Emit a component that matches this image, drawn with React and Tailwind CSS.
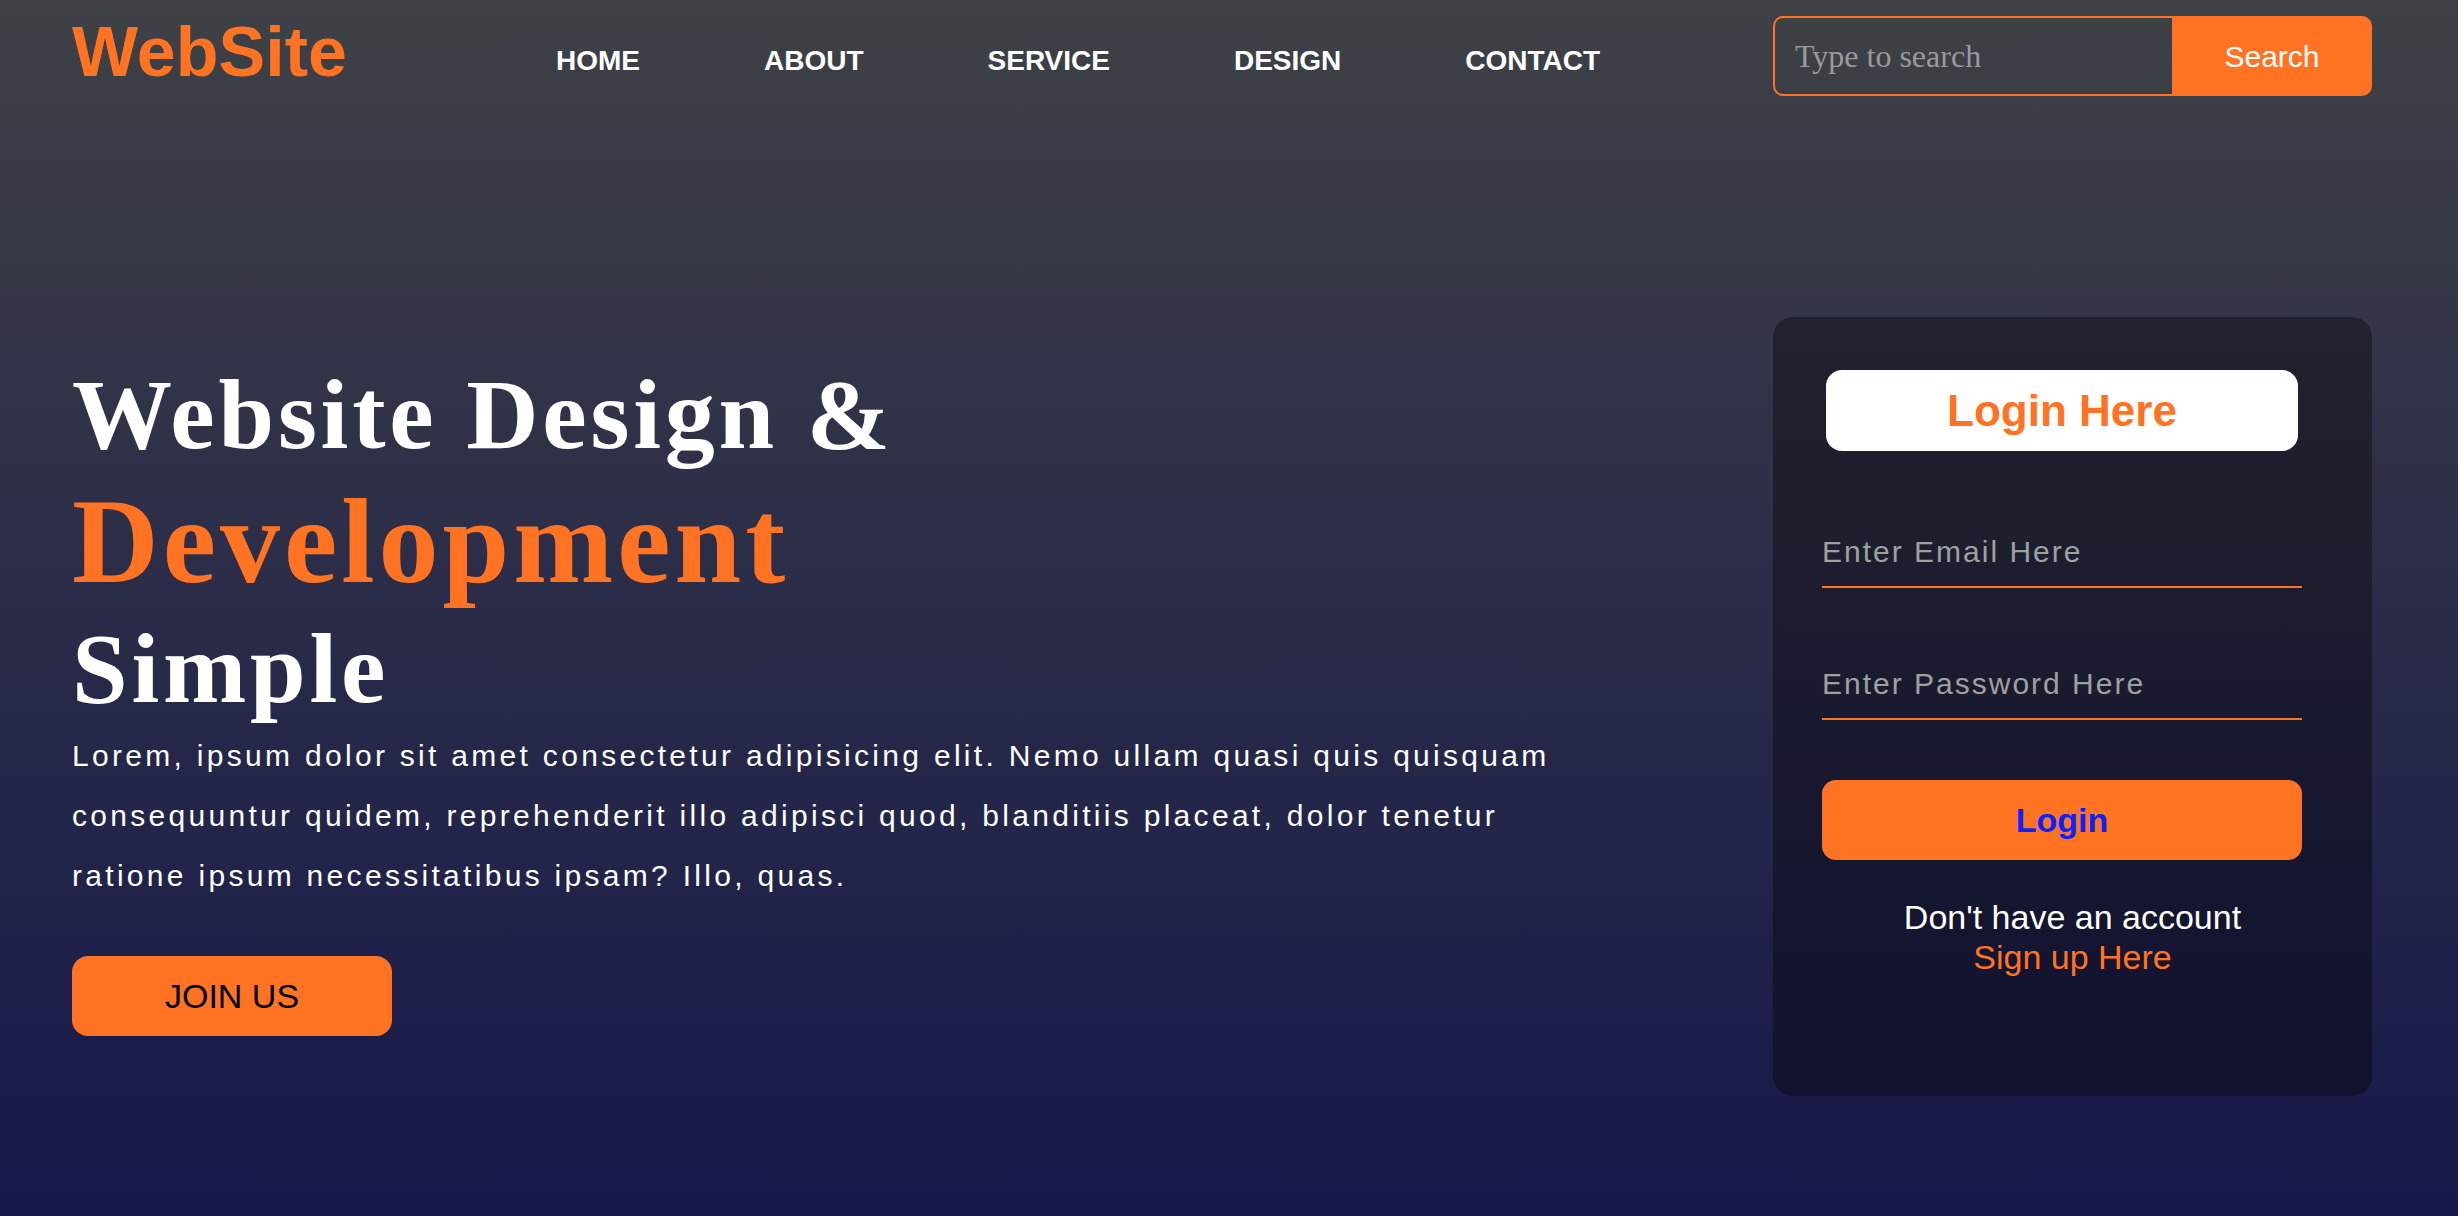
import React from 'react';

const navItems = ['HOME', 'ABOUT', 'SERVICE', 'DESIGN', 'CONTACT'];

function Header() {
  return (
    <header className="flex h-[113px] items-start">
      {/* logo */}
      <div className="ml-[72px] mt-[17px] w-[484px] text-[70px] leading-[70px] font-bold text-[#ff7322]">
        WebSite
      </div>

      <ul className="mt-[47px] flex gap-[124px]">
        {navItems.map(item => (
          <li key={item} className="text-[28px] leading-[28px] font-bold text-white">
            {item}
          </li>
        ))}
      </ul>

      {/* search */}
      <div className="ml-auto mr-[86px] mt-[16px] flex h-[80px] w-[599px]">
        <input
          type="text"
          placeholder="Type to search"
          className="h-full w-[399px] rounded-l-[10px] border-2 border-r-0 border-[#ff7322] bg-transparent pl-[20px] font-['Liberation_Serif',serif] text-[32px] text-white outline-none placeholder:text-[#9a9a9a]"
        />
        <button className="flex-1 rounded-r-[10px] bg-[#ff7322] text-[30px] text-white">
          Search
        </button>
      </div>
    </header>
  );
}

function Hero() {
  return (
    <div className="w-[1510px] pt-[40px]">
      <h1 className="font-['Liberation_Serif',serif] font-bold text-white">
        <div className="text-[100px] leading-[115px] tracking-[3.8px]">Website Design &amp;</div>
        <div className="text-[120px] leading-[139px] tracking-[4px] text-[#ff7322]">Development</div>
        <div className="text-[100px] leading-[115px] tracking-[3.8px]">Simple</div>
      </h1>
      <p className="text-[30px] leading-[60px] tracking-[3.3px] text-white">
        Lorem, ipsum dolor sit amet consectetur adipisicing elit. Nemo ullam quasi quis quisquam
        consequuntur quidem, reprehenderit illo adipisci quod, blanditiis placeat, dolor tenetur
        ratione ipsum necessitatibus ipsam? Illo, quas.
      </p>
      <button className="mt-[50px] h-[80px] w-[320px] rounded-[16px] bg-[#ff7322] text-[34px] text-black">
        JOIN US
      </button>
    </div>
  );
}

function LoginCard() {
  return (
    <div className="mr-[86px] h-[779px] w-[599px] rounded-[20px] bg-black/35">
      <div className="ml-[53px] mt-[53px] flex h-[81px] w-[472px] items-center justify-center rounded-[16px] bg-white text-[44px] font-bold text-[#ff7322]">
        Login Here
      </div>

      <div className="ml-[49px] w-[480px]">
        <input
          type="email"
          placeholder="Enter Email Here"
          className="mt-[66px] box-content block h-[69px] w-full border-b-2 border-[#ff7322] bg-transparent text-[30px] tracking-[2px] text-white outline-none placeholder:text-[#a0a0a0]"
        />
        <input
          type="password"
          placeholder="Enter Password Here"
          className="mt-[61px] box-content block h-[69px] w-full border-b-2 border-[#ff7322] bg-transparent text-[30px] tracking-[2px] text-white outline-none placeholder:text-[#a0a0a0]"
        />
        <button className="mt-[60px] block h-[80px] w-full rounded-[14px] bg-[#ff7322] text-[34px] font-bold text-[#0b22ff]">
          Login
        </button>
      </div>

      <div className="mt-[37px] text-center text-[34px] leading-[40px]">
        <p className="text-white">Don't have an account</p>
        <a href="#" className="text-[#ff7322]">Sign up Here</a>
      </div>
    </div>
  );
}

export default function App() {
  return (
    <div className="h-[1216px] w-full overflow-hidden bg-linear-to-b from-[#3e4145] via-[#2c2d48] via-46% to-[#17174a] font-['Liberation_Sans',Arial,sans-serif]">
      <Header />
      <main className="mt-[204px] flex items-start justify-between pl-[72px]">
        <Hero />
        <LoginCard />
      </main>
    </div>
  );
}
